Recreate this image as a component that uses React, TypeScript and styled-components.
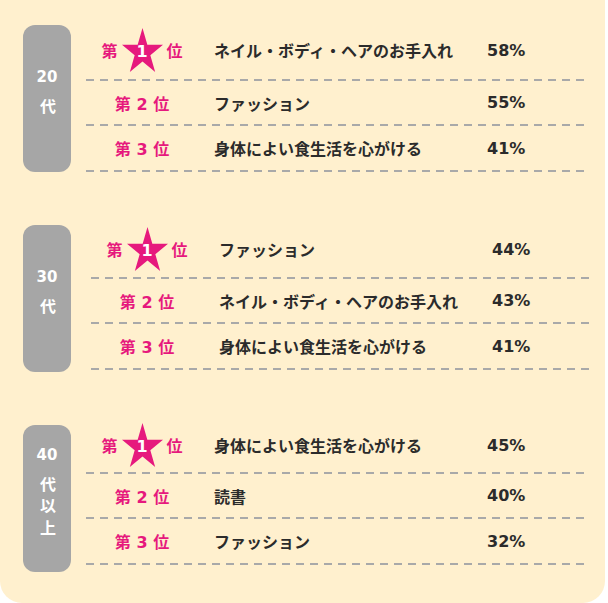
import React from "react";
import styled, { createGlobalStyle } from "styled-components";

const GlobalStyle = createGlobalStyle`
    html, body {
        margin: 0;
        padding: 0;
        background: #ffffff;
    }
    body {
        font-family: "DejaVu Sans", "Noto Sans CJK JP", sans-serif;
    }
`;

const Panel = styled.div`
    width: 605px;
    height: 603px;
    box-sizing: border-box;
    padding-top: 25px;
    background: #fff0ce;
    border-radius: 0 0 22px 22px;
    display: flex;
    flex-direction: column;
    gap: 53px;
`;

const Section = styled.section<{ $indent: number }>`
    display: flex;
    align-items: flex-start;
    height: 147px;
    padding-left: 23px;
    gap: ${(p) => p.$indent}px;
`;

const AgePill = styled.div`
    width: 48px;
    height: 147px;
    flex-shrink: 0;
    box-sizing: border-box;
    padding-bottom: 14px;
    border-radius: 12px;
    background: #a6a6a6;
    color: #ffffff;
    font-weight: 700;
    display: flex;
    flex-direction: column;
    align-items: center;
    justify-content: center;
`;

const AgeNumber = styled.div`
    font-size: 15px;
    line-height: 21px;
`;

const AgeKanji = styled.div`
    margin-top: 6px;
    display: flex;
    flex-direction: column;
    align-items: center;
    padding-left: 2px;
    font-family: "Noto Sans CJK JP", sans-serif;
`;

const KanjiLine = styled.div`
    height: 22px;
    font-size: 16px;
    line-height: 22px;
`;

const Table = styled.div<{ $lift: number }>`
    width: 498px;
    margin-top: ${(p) => -p.$lift}px;
    display: flex;
    flex-direction: column;
`;

const Row = styled.div<{ $height: number; $pad: number }>`
    display: grid;
    grid-template-columns: 112px 257px 1fr;
    column-gap: 16px;
    align-items: center;
    height: ${(p) => p.$height}px;
    padding-bottom: ${(p) => p.$pad + 2}px;
    background: repeating-linear-gradient(
            to right,
            #a9a9a9 0 8px,
            transparent 8px 14px
        )
        left bottom / 100% 2px no-repeat;
    color: #2b2b2b;
    font-size: 16px;
    font-weight: 700;
`;

const Rank = styled.div`
    display: flex;
    align-items: center;
    justify-content: center;
    gap: 4px;
    color: #e6197d;
    font-size: 16px;
    font-weight: 700;
    white-space: pre;
`;

const StarBadge = styled.div`
    position: relative;
    width: 41px;
    height: 44px;
`;

const StarNumber = styled.span`
    position: absolute;
    left: 0;
    right: 0;
    top: 14px;
    text-align: center;
    color: #ffffff;
    font-size: 16px;
    line-height: 20px;
    font-weight: 700;
`;

const Item = styled.div`
    white-space: nowrap;
`;

const Percent = styled.div`
    white-space: nowrap;
`;

function Star() {
    return (
        <StarBadge>
            <svg width="41" height="44" viewBox="0 0 100 100" preserveAspectRatio="none">
                <polygon
                    points="50,0 61.8,38.2 100,38.2 69.1,61.8 80.9,100 50,76.4 19.1,100 30.9,61.8 0,38.2 38.2,38.2"
                    fill="#e6197d"
                />
            </svg>
            <StarNumber>1</StarNumber>
        </StarBadge>
    );
}

type Entry = { item: string; pct: string };

type Group = {
    age: string;
    kanji: string[];
    indent: number;
    lift: number;
    topPad: number;
    entries: Entry[];
};

const groups: Group[] = [
    {
        age: "20",
        kanji: ["代"],
        indent: 15,
        lift: 0,
        topPad: 4,
        entries: [
            { item: "ネイル・ボディ・ヘアのお手入れ", pct: "58%" },
            { item: "ファッション", pct: "55%" },
            { item: "身体によい食生活を心がける", pct: "41%" },
        ],
    },
    {
        age: "30",
        kanji: ["代"],
        indent: 20,
        lift: 1,
        topPad: 3,
        entries: [
            { item: "ファッション", pct: "44%" },
            { item: "ネイル・ボディ・ヘアのお手入れ", pct: "43%" },
            { item: "身体によい食生活を心がける", pct: "41%" },
        ],
    },
    {
        age: "40",
        kanji: ["代", "以", "上"],
        indent: 15,
        lift: 5,
        topPad: 2,
        entries: [
            { item: "身体によい食生活を心がける", pct: "45%" },
            { item: "読書", pct: "40%" },
            { item: "ファッション", pct: "32%" },
        ],
    },
];

const rowHeights = [50, 43, 44];

export default function App() {
    return (
        <>
            <GlobalStyle />
            <Panel>
                {groups.map((g) => (
                    <Section key={g.age} $indent={g.indent}>
                        <AgePill>
                            <AgeNumber>{g.age}</AgeNumber>
                            <AgeKanji>
                                {g.kanji.map((k) => (
                                    <KanjiLine key={k}>{k}</KanjiLine>
                                ))}
                            </AgeKanji>
                        </AgePill>
                        <Table $lift={g.lift}>
                            {g.entries.map((e, i) => (
                                <Row
                                    key={e.item}
                                    $height={rowHeights[i]}
                                    $pad={i === 0 ? g.topPad : 0}
                                >
                                    {i === 0 ? (
                                        <Rank>
                                            第<Star />位
                                        </Rank>
                                    ) : (
                                        <Rank>{`第 ${i + 1} 位`}</Rank>
                                    )}
                                    <Item>{e.item}</Item>
                                    <Percent>{e.pct}</Percent>
                                </Row>
                            ))}
                        </Table>
                    </Section>
                ))}
            </Panel>
        </>
    );
}
